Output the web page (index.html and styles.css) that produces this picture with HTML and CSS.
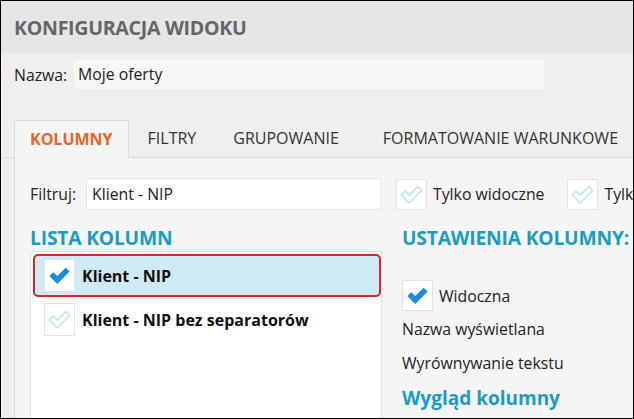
FILE: index.html
```html
<!DOCTYPE html>
<html lang="pl">
<head>
    <meta charset="UTF-8">
    <title>Konfiguracja widoku</title>
    <link rel="stylesheet" href="styles.css">
</head>
<body>
    <div class="frame">
        <div class="header">
            <h1>KONFIGURACJA WIDOKU</h1>
        </div>

        <div class="name-row">
            <label>Nazwa:</label>
            <div class="name-input">Moje oferty</div>
        </div>

        <!-- Tabs -->
        <div class="tabs">
            <div class="tab active">KOLUMNY</div>
            <div class="tab">FILTRY</div>
            <div class="tab">GRUPOWANIE</div>
            <div class="tab">FORMATOWANIE WARUNKOWE</div>
        </div>

        <div class="panel">
            <div class="filter-row">
                <label>Filtruj:</label>
                <div class="filter-input">Klient - NIP</div>
                <div class="check-label">
                    <span class="checkbox off">
                        <svg viewBox="0 0 24 24"><path d="M3 12.5 L6.5 9 L10 12.5 L17.5 5 L21 8.5 L10 19.5 Z"/></svg>
                    </span>
                    <span>Tylko widoczne</span>
                </div>
                <div class="check-label">
                    <span class="checkbox off">
                        <svg viewBox="0 0 24 24"><path d="M3 12.5 L6.5 9 L10 12.5 L17.5 5 L21 8.5 L10 19.5 Z"/></svg>
                    </span>
                    <span>Tylko zaznaczone</span>
                </div>
            </div>

            <div class="columns">
                <div class="col-list">
                    <h2>LISTA KOLUMN</h2>
                    <div class="list-box">
                        <div class="list-item selected">
                            <span class="checkbox on">
                                <svg viewBox="0 0 24 24"><path d="M3 12.5 L6.5 9 L10 12.5 L17.5 5 L21 8.5 L10 19.5 Z"/></svg>
                            </span>
                            <span>Klient - NIP</span>
                        </div>
                        <div class="list-item">
                            <span class="checkbox off">
                                <svg viewBox="0 0 24 24"><path d="M3 12.5 L6.5 9 L10 12.5 L17.5 5 L21 8.5 L10 19.5 Z"/></svg>
                            </span>
                            <span>Klient - NIP bez separatorów</span>
                        </div>
                    </div>
                </div>

                <div class="col-settings">
                    <h2>USTAWIENIA KOLUMNY:</h2>
                    <div class="check-label visible">
                        <span class="checkbox on">
                            <svg viewBox="0 0 24 24"><path d="M3 12.5 L6.5 9 L10 12.5 L17.5 5 L21 8.5 L10 19.5 Z"/></svg>
                        </span>
                        <span>Widoczna</span>
                    </div>
                    <div class="setting">Nazwa wyświetlana</div>
                    <div class="setting">Wyrównywanie tekstu</div>
                    <h3>Wygląd kolumny</h3>
                </div>
            </div>
        </div>
    </div>
</body>
</html>
```

FILE: styles.css
```css
body {
    margin: 0;
    font-family: "Open Sans", "Noto Sans", sans-serif;
    color: #222;
}

.frame {
    width: 634px;
    height: 419px;
    box-sizing: border-box;
    border: 1px solid #000;
    background-color: #efefef;
    overflow: hidden;
}

.header {
    height: 52px;
    background-color: #e6e6e6;
    padding-left: 13px;
    display: flex;
    align-items: center;
}

.header h1 {
    margin: 0;
    font-size: 19.6px;
    font-weight: 700;
    color: #666;
    letter-spacing: -0.3px;
}

.name-row {
    display: flex;
    align-items: center;
    margin-top: 7px;
    padding-left: 13px;
    font-size: 15.8px;
}

.name-row label {
    width: 60px;
}

.name-input {
    width: 466px;
    height: 29px;
    line-height: 29px;
    padding-left: 4px;
    background-color: #f7f7f7;
}

/* Tabs */
.tabs {
    display: flex;
    margin-top: 31px;
    padding-left: 13px;
    height: 37px;
    border-bottom: 1px solid #dcdcdc;
    font-size: 16px;
    white-space: nowrap;
}

.tab {
    padding: 0 18px 0 19px;
    line-height: 37px;
    color: #333;
}

.tab.active {
    width: 116px;
    box-sizing: border-box;
    padding: 0 15px;
    background-color: #f5f5f5;
    border: 1px solid #dcdcdc;
    border-bottom: none;
    line-height: 36px;
    color: #e8662a;
    font-weight: 700;
    margin-bottom: -1px;
    height: 38px;
}

.tab:nth-child(3) {
    padding-right: 25px;
}

.panel {
    margin-left: 13px;
    background-color: #f5f5f5;
    border-left: 1px solid #dcdcdc;
    padding-left: 15px;
    height: 300px;
}

.filter-row {
    display: flex;
    align-items: center;
    padding-top: 20px;
    font-size: 15.8px;
    white-space: nowrap;
}

.filter-row label {
    width: 56px;
    flex-shrink: 0;
}

.filter-input {
    width: 288px;
    height: 30px;
    line-height: 30px;
    padding-left: 5px;
    background-color: #fff;
    border: 1px solid #e6e6e6;
    margin-right: 15px;
    flex-shrink: 0;
}

.check-label {
    display: flex;
    align-items: center;
    margin-right: 23px;
}

.check-label:last-child {
    margin-right: 0;
}

.checkbox {
    width: 31px;
    height: 31px;
    box-sizing: border-box;
    background-color: #fff;
    border: 1px solid #e3e3e3;
    display: flex;
    align-items: center;
    justify-content: center;
    margin-right: 6px;
    flex-shrink: 0;
}

.checkbox svg {
    width: 27px;
    height: 27px;
}

.checkbox.on svg path {
    fill: #1a8cd8;
}

.checkbox.off svg path {
    fill: none;
    stroke: #bfe2f4;
    stroke-width: 1.4;
}

.columns {
    display: flex;
    margin-top: 16px;
}

h2 {
    margin: 0 0 1px 0;
    font-size: 19.3px;
    font-weight: 700;
    color: #1a9cc3;
    letter-spacing: -0.2px;
    line-height: 24px;
}

.col-list {
    width: 352px;
    flex-shrink: 0;
}

.list-box {
    background-color: #fff;
    border: 1px solid #e0e0e0;
    height: 200px;
    padding: 2px 0 0 2px;
}

.list-item {
    display: flex;
    align-items: center;
    height: 43px;
    padding-left: 11px;
    font-size: 16px;
    font-weight: 700;
    color: #111;
    box-sizing: border-box;
    margin-bottom: 1px;
    white-space: nowrap;
}

.list-item .checkbox {
    margin-right: 7px;
    height: 33px;
}

.list-item.selected {
    background-color: #cfeaf5;
    border: 2px solid #e1202a;
    border-radius: 5px;
    padding-left: 9px;
}

.col-settings {
    padding-left: 20px;
    font-size: 15.8px;
    white-space: nowrap;
}

.check-label.visible {
    margin: 30px 0 0 0;
}

.setting {
    margin-top: 6px;
    height: 24px;
    line-height: 24px;
}

.setting + .setting {
    margin-top: 10px;
}

h3 {
    margin: 10px 0 0 0;
    font-size: 19px;
    line-height: 26px;
    font-weight: 700;
    color: #1a9cc3;
}
```
